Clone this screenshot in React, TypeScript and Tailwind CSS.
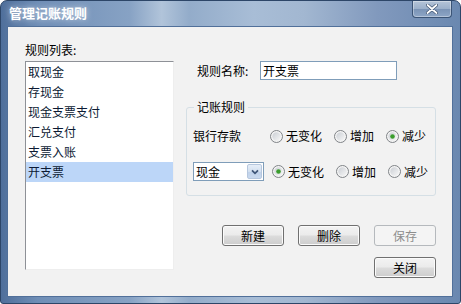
import React from 'react'

const FONT = { fontFamily: '"Noto Sans CJK SC", "Noto Sans", sans-serif' }

const RULES = ['取现金', '存现金', '现金支票支付', '汇兑支付', '支票入账', '开支票']

function Radio({ checked }: { checked?: boolean }) {
  return (
    <svg width="13" height="13" viewBox="0 0 13 13" className="shrink-0">
      <defs>
        <linearGradient id={checked ? 'rgc' : 'rgu'} x1="0" y1="0" x2="1" y2="1">
          <stop offset="0" stopColor="#cbcfd5" />
          <stop offset="1" stopColor="#f6f6f6" />
        </linearGradient>
      </defs>
      <circle cx="6.5" cy="6.5" r="6" fill="#f4f4f4" stroke="#7f8387" />
      <circle cx="6.5" cy="6.5" r="4.2" fill={`url(#${checked ? 'rgc' : 'rgu'})`} />
      {checked && <circle cx="6.5" cy="6.5" r="2.3" fill="#3a9d2d" />}
    </svg>
  )
}

function RadioOption({ label, checked }: { label: string; checked?: boolean }) {
  return (
    <div className="flex items-center gap-[3px]">
      <Radio checked={checked} />
      <span className="text-[12px] leading-[16px] text-black">{label}</span>
    </div>
  )
}

function Button({ children, disabled }: { children: React.ReactNode; disabled?: boolean }) {
  return (
    <button
      disabled={disabled}
      className={`w-[62px] h-[21px] rounded-[3px] border text-[12px] leading-[16px] ${
        disabled
          ? 'border-[#b5b9bd] bg-[#f4f4f4] text-[#8d8d8d]'
          : 'border-[#707070] bg-[linear-gradient(180deg,#f3f3f3_0%,#ebebeb_48%,#dcdcdc_52%,#cdcdcd_100%)] text-black shadow-[inset_0_0_0_1px_#fbfbfb]'
      }`}
    >
      {children}
    </button>
  )
}

export default function App() {
  return (
    <div
      style={FONT}
      className="relative w-[461px] h-[304px] flex flex-col rounded-t-[7px] rounded-b-[3px] border border-[#2d4668] bg-[linear-gradient(90deg,#4f6f9b_0%,#6f8eb6_8%,#87a2c4_28%,#b1c4da_35%,#93acca_41%,#a8bdd6_55%,#a2b7d1_66%,#8199bd_82%,#6a88b0_100%)]"
    >
      {/* title bar */}
      <div className="h-[25px] flex items-start justify-between pl-[8px] pr-[8px]">
        <span className="mt-[3px] text-[13px] leading-[18px] font-bold text-white [text-shadow:0_0_6px_rgba(255,255,255,0.6)]">
          管理记账规则
        </span>
        <div className="w-[40px] h-[17px] rounded-b-[4px] border border-t-0 border-[#3b5476] bg-[linear-gradient(180deg,#b4c4d8_0%,#9aafca_50%,#7a93b6_51%,#8ea6c6_100%)] flex items-center justify-center shadow-[inset_0_0_0_1px_rgba(255,255,255,0.35)]">
          <svg width="12" height="10" viewBox="0 0 12 10">
            <path d="M1.5 1 L10.5 9 M10.5 1 L1.5 9" stroke="#3b4f6c" strokeWidth="3.2" strokeLinecap="round" />
            <path d="M1.5 1 L10.5 9 M10.5 1 L1.5 9" stroke="#ffffff" strokeWidth="1.8" strokeLinecap="round" />
          </svg>
        </div>
      </div>

      {/* client area */}
      <div className="ml-[6px] w-[446px] h-[271px] border border-[#51709a] bg-[#f2f2f2] flex">
        {/* left column */}
        <div className="pl-[17px] pt-[16px] flex flex-col">
          <span className="text-[12px] leading-[14px] text-black">规则列表:</span>
          <div className="mt-[4px] w-[149px] h-[209px] bg-white border border-l-[#8e9197] border-t-[#8e9197] border-r-[#eeeeee] border-b-[#eeeeee]">
            {RULES.map((r, i) => (
              <div
                key={r}
                className={`h-[20px] pl-[2px] text-[12px] leading-[20px] text-[#0c1a33] ${
                  i === RULES.length - 1 ? 'bg-[#bcd6f8]' : ''
                }`}
              >
                {r}
              </div>
            ))}
          </div>
        </div>

        {/* right column */}
        <div className="ml-[12px] w-[250px] pt-[34px] flex flex-col">
          <div className="flex items-center h-[19px]">
            <span className="pl-[11px] w-[74px] text-[12px] leading-[16px] text-black">规则名称:</span>
            <div className="w-[137px] h-[19px] border border-[#7f9db9] bg-white pl-[2px] text-[12px] leading-[17px] text-black">
              开支票
            </div>
          </div>

          <div className="relative mt-[27px] h-[89px] rounded-[3px] border border-[#d5dfe5] pl-[6px] pt-[18px]">
            <span className="absolute -top-[9px] left-[7px] px-[3px] bg-[#f2f2f2] text-[12px] leading-[16px] text-black">
              记账规则
            </span>
            <div className="flex items-center h-[20px]">
              <span className="w-[77px] text-[12px] leading-[16px] text-black">银行存款</span>
              <div className="flex items-center gap-[12px]">
                <RadioOption label="无变化" />
                <RadioOption label="增加" />
                <RadioOption label="减少" checked />
              </div>
            </div>
            <div className="flex items-center mt-[16px] h-[19px]">
              <div className="w-[71px] h-[19px] border border-[#7f9db9] bg-white flex items-center justify-between">
                <span className="pl-[2px] text-[12px] leading-[16px] text-black">现金</span>
                <div className="w-[15px] h-[15px] mr-[1px] rounded-[2px] border border-[#b6c7de] bg-[linear-gradient(180deg,#e6eef8_0%,#d3e0f0_50%,#bfd1ea_51%,#c9d9ee_100%)] flex items-center justify-center">
                  <svg width="8" height="6" viewBox="0 0 8 6">
                    <path d="M1 1.3 L4 4.3 L7 1.3" fill="none" stroke="#3f5678" strokeWidth="1.8" />
                  </svg>
                </div>
              </div>
              <div className="ml-[8px] flex items-center gap-[12px]">
                <RadioOption label="无变化" checked />
                <RadioOption label="增加" />
                <RadioOption label="减少" />
              </div>
            </div>
          </div>

          <div className="mt-[29px] flex justify-end gap-[14px]">
            <Button>新建</Button>
            <Button>删除</Button>
            <Button disabled>保存</Button>
          </div>
          <div className="mt-[11px] flex justify-end">
            <Button>关闭</Button>
          </div>
        </div>
      </div>
    </div>
  )
}
